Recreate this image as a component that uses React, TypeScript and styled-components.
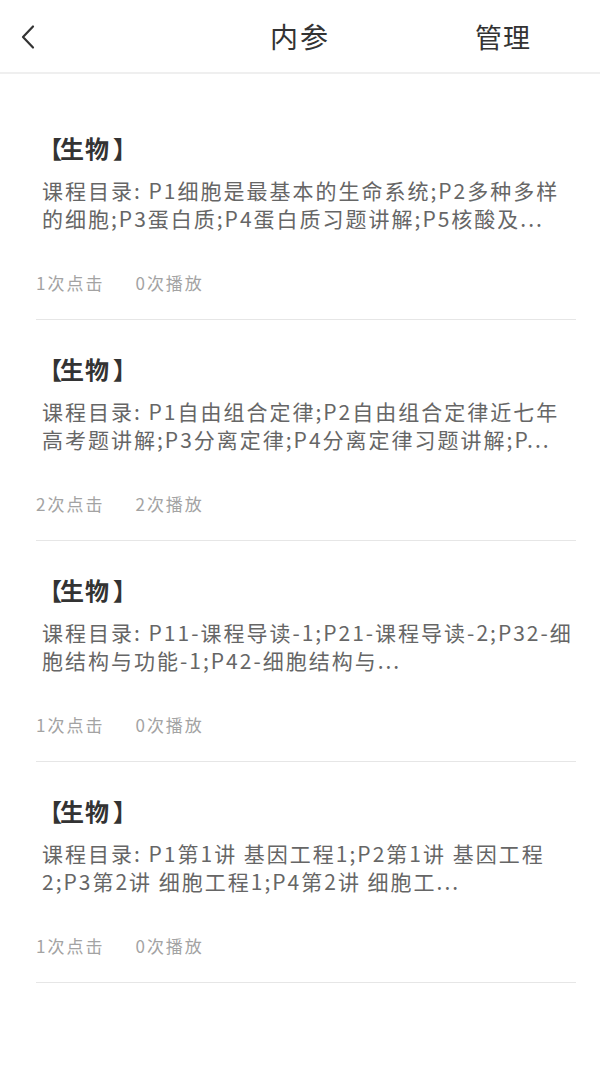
import styled, { createGlobalStyle } from 'styled-components';

type Course = {
  lines: string[];
  clicks: number;
  plays: number;
};

const courses: Course[] = [
  {
    lines: ['课程目录: P1细胞是最基本的生命系统;P2多种多样', '的细胞;P3蛋白质;P4蛋白质习题讲解;P5核酸及...'],
    clicks: 1,
    plays: 0,
  },
  {
    lines: ['课程目录: P1自由组合定律;P2自由组合定律近七年', '高考题讲解;P3分离定律;P4分离定律习题讲解;P...'],
    clicks: 2,
    plays: 2,
  },
  {
    lines: ['课程目录: P11-课程导读-1;P21-课程导读-2;P32-细', '胞结构与功能-1;P42-细胞结构与...'],
    clicks: 1,
    plays: 0,
  },
  {
    lines: ['课程目录: P1第1讲 基因工程1;P2第1讲 基因工程', '2;P3第2讲 细胞工程1;P4第2讲 细胞工...'],
    clicks: 1,
    plays: 0,
  },
];

function App() {
  return (
    <>
      <GlobalStyle />
      <Page>
        <Header>
          <BackButton>
            <svg width="16" height="26" viewBox="0 0 16 26" fill="none">
              <path d="M13 2.5L3 13L13 23.5" stroke="#333" strokeWidth="2.2" strokeLinecap="round" strokeLinejoin="round" />
            </svg>
          </BackButton>
          <Title>内参</Title>
          <Manage>管理</Manage>
        </Header>
        <List>
          {courses.map((c, i) => (
            <Card key={i}>
              <Subject>
                <Bracket $side="left">【</Bracket>生物<Bracket $side="right">】</Bracket>
              </Subject>
              <Desc>
                {c.lines.map((l, j) => (
                  <DescLine key={j}>{l}</DescLine>
                ))}
              </Desc>
              <Stats>
                <Stat>{c.clicks}次点击</Stat>
                <Stat>{c.plays}次播放</Stat>
              </Stats>
            </Card>
          ))}
        </List>
      </Page>
    </>
  );
}

export default App;

const GlobalStyle = createGlobalStyle`
body {
  margin: 0;
  background: #fff;
  font-family: "Noto Sans CJK SC", "Noto Sans", sans-serif;
}
`;

const Page = styled.div`
width: 600px;
min-height: 1067px;
background: #fff;
`;

const Header = styled.div`
height: 72px;
border-bottom: 2px solid #efefef;
display: flex;
align-items: center;
position: relative;
padding: 0 20px;
box-sizing: content-box;
`;

const BackButton = styled.div`
width: 40px;
display: flex;
align-items: center;
padding-top: 2px;
`;

const Title = styled.div`
position: absolute;
left: 0;
right: 0;
text-align: center;
font-size: 28px;
letter-spacing: 2px;
color: #333;
pointer-events: none;
`;

const Manage = styled.div`
margin-left: auto;
margin-right: 49px;
font-size: 27px;
letter-spacing: 1px;
color: #333;
`;

const List = styled.div`
padding-top: 25px;
`;

const Card = styled.div`
margin: 0 24px 0 36px;
padding: 34px 0 25px;
border-bottom: 1px solid #e6e6e6;
`;

const Subject = styled.div`
font-size: 24px;
line-height: 30px;
font-weight: bold;
color: #333;
margin-left: 2px;
letter-spacing: 1px;
white-space: nowrap;
`;

const Bracket = styled.span<{ $side: 'left' | 'right' }>`
display: inline-block;
width: 22px;
letter-spacing: 0;
text-align: ${(p) => (p.$side === 'left' ? 'right' : 'left')};
padding: ${(p) => (p.$side === 'left' ? '0 3px 0 0' : '0 0 0 3px')};
box-sizing: border-box;
`;

const Desc = styled.div`
margin-top: 13px;
padding-left: 6px;
font-size: 21px;
line-height: 28px;
letter-spacing: 2px;
color: #666;
`;

const DescLine = styled.div`
white-space: nowrap;
`;

const Stats = styled.div`
margin-top: 40px;
display: flex;
gap: 31px;
font-size: 17px;
line-height: 22px;
letter-spacing: 2px;
color: #a3a3a3;
`;

const Stat = styled.span``;
